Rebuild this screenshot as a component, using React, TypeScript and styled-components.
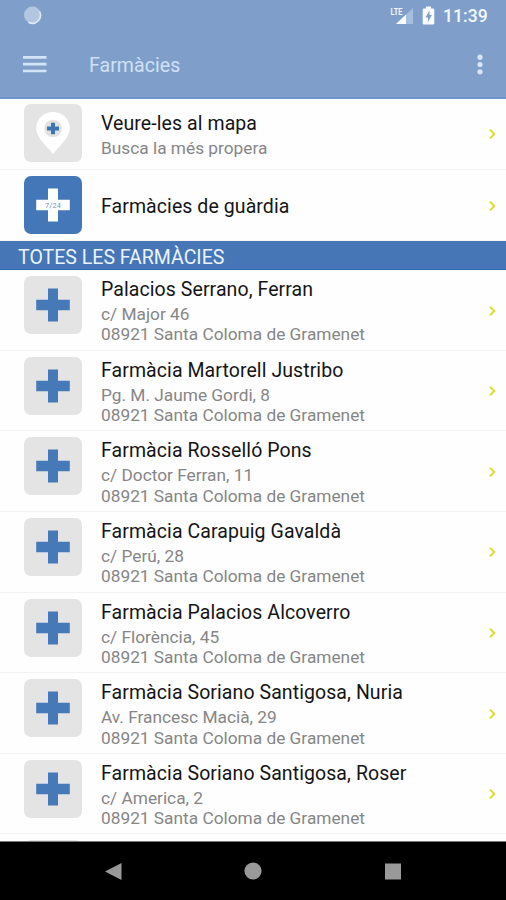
import React from "react";
import styled, { createGlobalStyle } from "styled-components";

const GlobalStyle = createGlobalStyle`
  * { box-sizing: border-box; }
  body { margin: 0; background: #fff; font-family: Roboto, "Liberation Sans", sans-serif; }
`;

const Screen = styled.div`
  width: 506px;
  height: 900px;
  display: flex;
  flex-direction: column;
  overflow: hidden;
  background: #fefefe;
`;

const Header = styled.header`
  flex: none;
  height: 99px;
  background: #7f9fca;
  border-bottom: 2px solid #6f96c8;
`;

const StatusBar = styled.div`
  height: 32px;
  display: flex;
  align-items: center;
  padding: 0 19px 0 23px;
`;

const Spinner = styled.svg`
  display: block;
  margin-right: auto;
`;

const Signal = styled.svg`
  display: block;
  margin-right: 8px;
`;

const Battery = styled.svg`
  display: block;
  margin-right: 8px;
`;

const Clock = styled.span`
  width: 44px;
  font-size: 17.6px;
  font-weight: 500;
  line-height: 32px;
  color: #f3f8fd;
  white-space: nowrap;
`;

const Toolbar = styled.div`
  height: 66px;
  display: flex;
  align-items: center;
  padding: 0 22px 0 23px;
`;

const ToolbarTitle = styled.h1`
  margin: 0 auto 0 42px;
  padding-top: 2px;
  font-size: 19.5px;
  line-height: 24px;
  font-weight: 400;
  letter-spacing: 0.06px;
  color: #d0e1f6;
`;

const Content = styled.main`
  flex: 1;
  min-height: 0;
  overflow: hidden;
`;

const Row = styled.div<{ $height: number; $top?: number }>`
  height: ${(p) => p.$height}px;
  display: flex;
  padding: ${(p) => p.$top ?? 6}px 9px 0 24px;
  border-bottom: 1px solid #f3f3f3;
`;

const Tile = styled.div<{ $active?: boolean }>`
  flex: none;
  width: 58px;
  height: 58px;
  border-radius: 7px;
  background: ${(p) => (p.$active ? "#4477b7" : "#e4e4e4")};
`;

const Details = styled.div<{ $top?: number }>`
  flex: 1;
  padding-left: 19px;
  padding-top: ${(p) => p.$top ?? 2}px;
`;

const Name = styled.div`
  font-size: 19.5px;
  line-height: 24px;
  letter-spacing: 0.08px;
  color: #151515;
  white-space: nowrap;
`;

const Line = styled.div<{ $first?: boolean }>`
  font-size: 17.3px;
  line-height: 20.3px;
  margin-top: ${(p) => (p.$first ? 2 : 0)}px;
  color: #868686;
  white-space: nowrap;
`;

const ChevronIcon = styled.svg<{ $top: number }>`
  flex: none;
  margin-top: ${(p) => p.$top}px;
`;

const SectionTitle = styled.h2`
  margin: 0;
  height: 29px;
  padding-left: 18px;
  padding-top: 3px;
  font-size: 19.55px;
  line-height: 28px;
  font-weight: 400;
  color: #eaf3ff;
  background: #4676b5;
  border-bottom: 1px solid #3467ac;
  white-space: nowrap;
`;

const NavBar = styled.nav`
  flex: none;
  height: 59px;
  background: #000;
  border-top: 1px solid #777;
  display: flex;
  justify-content: space-between;
  padding: 0 104px;

  svg { display: block; }
`;

const Cross = () => (
  <svg width="58" height="58" viewBox="0 0 58 58">
    <path d="M24 12.5h10v11.3h11.8v10.4H34v11.3H24V34.2H12.2V23.8H24z" fill="#4679b8" />
  </svg>
);

const MapPin = () => (
  <svg width="58" height="58" viewBox="0 0 58 58">
    <path d="M29 50C23.5 42.5 12.2 34 12.2 24.2a16.8 16.2 0 0 1 33.6 0C45.8 34 34.5 42.5 29 50z" fill="#fff" />
    <circle cx="29" cy="24.5" r="8.8" fill="#e2e2e2" />
    <path d="M27 18.800h4v3.700h4v4h-4v3.700h-4v-3.700h-4v-4h4z" fill="#3d75b6" />
  </svg>
);

const DutyCross = () => (
  <svg width="58" height="58" viewBox="0 0 58 58">
    <path d="M24 12.5h10v11.3h11.8v10.4H34v11.3H24V34.2H12.2V23.8H24z" fill="#fff" />
    <text x="29" y="31.5" textAnchor="middle" fontSize="7.3" letterSpacing="0.2" fill="#7396c4">7/24</text>
  </svg>
);

const Chevron = ({ top = 28.5 }: { top?: number }) => (
  <ChevronIcon $top={top} width="8" height="12" viewBox="0 0 8 12">
    <path d="M1 1.800L5.300 6L1 10.200" fill="none" stroke="#dade30" strokeWidth="2" />
  </ChevronIcon>
);

const pharmacies = [
  ["Palacios Serrano, Ferran", "c/ Major 46"],
  ["Farmàcia Martorell Justribo", "Pg. M. Jaume Gordi, 8"],
  ["Farmàcia Rosselló Pons", "c/ Doctor Ferran, 11"],
  ["Farmàcia Carapuig Gavaldà", "c/ Perú, 28"],
  ["Farmàcia Palacios Alcoverro", "c/ Florència, 45"],
  ["Farmàcia Soriano Santigosa, Nuria", "Av. Francesc Macià, 29"],
  ["Farmàcia Soriano Santigosa, Roser", "c/ America, 2"],
];

export default function App() {
  return (
    <Screen>
      <GlobalStyle />
      <Header>
        <StatusBar>
          <Spinner width="19" height="20" viewBox="0 0 19 20">
            <circle cx="9.5" cy="9" r="8.5" fill="#b3c7e0" />
            <path d="M16.5 5.5a8 8 0 0 1-11 10.700" fill="none" stroke="#dfeaf6" strokeWidth="1.6" />
          </Spinner>
          <Signal width="24" height="20" viewBox="0 0 24 20">
            <path d="M23 2v16H6z" fill="#a7bfdf" />
            <path d="M16 8.600V18H6z" fill="#fafcff" />
            <text x="0.5" y="8.500" fontSize="9" fontWeight="700" fill="#f0f6fd" textLength="12" lengthAdjust="spacingAndGlyphs">LTE</text>
          </Signal>
          <Battery width="13" height="20" viewBox="0 0 13 20">
            <path d="M4 .5h5v2h2q1.300 0 1.300 1.300v13.400q0 1.300-1.300 1.300H2q-1.300 0-1.300-1.300V3.800Q.7 2.500 2 2.500h2z" fill="#f8fbff" />
            <path d="M7.500 4.500L3.500 11.500h2.500v4.500L9.800 9H7.500z" fill="#7f9fca" />
          </Battery>
          <Clock>11:39</Clock>
        </StatusBar>
        <Toolbar>
          <svg width="24" height="20" viewBox="0 0 24 20">
            <path d="M0 2.300h23.500M0 9.200h23.500M0 16h23.500" stroke="#d3e4f7" strokeWidth="2.700" />
          </svg>
          <ToolbarTitle>Farmàcies</ToolbarTitle>
          <svg width="8" height="22" viewBox="0 0 8 22">
            <g fill="#d7e5f6">
              <circle cx="4" cy="3.200" r="2.600" />
              <circle cx="4" cy="10.500" r="2.600" />
              <circle cx="4" cy="17.800" r="2.600" />
            </g>
          </svg>
        </Toolbar>
      </Header>
      <Content>
        <Row $height={71} $top={5.4}>
          <Tile><MapPin /></Tile>
          <Details $top={7.6}>
            <Name>Veure-les al mapa</Name>
            <Line $first>Busca la més propera</Line>
          </Details>
          <Chevron top={23.6} />
        </Row>
        <Row $height={71}>
          <Tile $active><DutyCross /></Tile>
          <Details $top={19}>
            <Name>Farmàcies de guàrdia</Name>
          </Details>
          <Chevron top={23.5} />
        </Row>
        <SectionTitle>TOTES LES FARMÀCIES</SectionTitle>
        {pharmacies.map(([name, street]) => (
          <Row key={name} $height={80.65}>
            <Tile><Cross /></Tile>
            <Details>
              <Name>{name}</Name>
              <Line $first>{street}</Line>
              <Line>08921 Santa Coloma de Gramenet</Line>
            </Details>
            <Chevron />
          </Row>
        ))}
        <Row $height={80.65}>
          <Tile />
        </Row>
      </Content>
      <NavBar>
        <svg width="18" height="59" viewBox="0 0 18 59">
          <path d="M1 29.500L17.500 21v17z" fill="#999" />
        </svg>
        <svg width="18" height="59" viewBox="0 0 18 59">
          <circle cx="9" cy="29" r="8.600" fill="#999" />
        </svg>
        <svg width="18" height="59" viewBox="0 0 18 59">
          <path d="M1 21.500h16v16H1z" fill="#999" />
        </svg>
      </NavBar>
    </Screen>
  );
}
